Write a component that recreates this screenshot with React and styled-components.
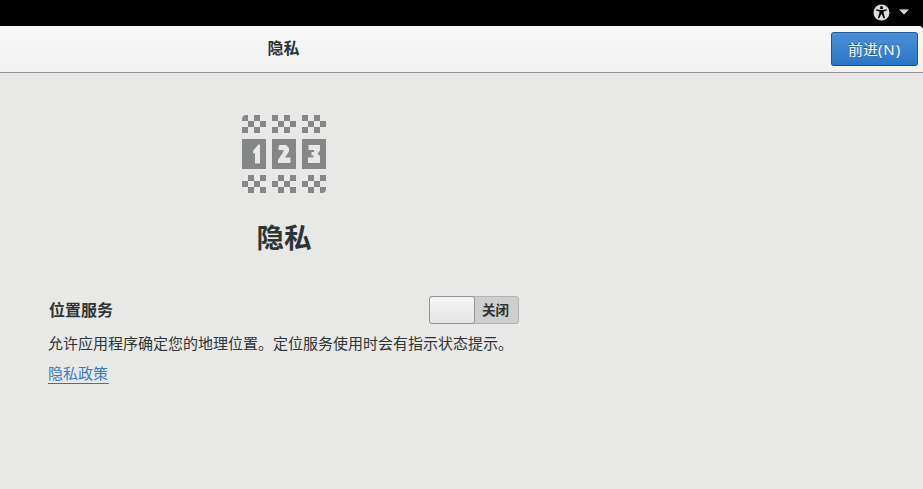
import React from "react";
import styled, { createGlobalStyle } from "styled-components";

const GlobalStyle = createGlobalStyle`
  * { box-sizing: border-box; }
  body {
    margin: 0;
    background: #000;
    color: #2e3436;
    font-family: "Noto Sans CJK SC", "Noto Sans", sans-serif;
    overflow: hidden;
  }
`;

const Screen = styled.div`
  display: flex;
  flex-direction: column;
  width: 923px;
  height: 489px;
`;

const TopBar = styled.div`
  display: flex;
  flex: none;
  align-items: center;
  justify-content: flex-end;
  gap: 8px;
  height: 26px;
  padding: 0 13px 2px 0;
  background: #000;
`;

const HeaderBar = styled.header`
  display: grid;
  flex: none;
  grid-template-columns: 567px 1fr;
  align-items: center;
  height: 47px;
  padding-right: 5px;
  background: linear-gradient(#f7f7f7, #f2f2f2);
  border-bottom: 1px solid #919191;
  border-top-right-radius: 4px;
`;

const HeaderTitle = styled.div`
  padding-bottom: 4px;
  font-size: 16px;
  font-weight: 700;
  line-height: 24px;
  text-align: center;
`;

const NextButton = styled.button`
  justify-self: end;
  width: 87px;
  height: 34px;
  padding: 0 0 1px;
  border: 1px solid #1c5187;
  border-color: #215b9c #1f5590 #184a80;
  border-radius: 3px;
  background: linear-gradient(#4a90d9, #2a76c6);
  color: #fff;
  font: 400 15px/29px "Noto Sans CJK SC", sans-serif;
  text-shadow: 0 -1px rgba(0, 0, 0, 0.35);
`;

const Latin = styled.span`
  font-family: "Noto Sans", sans-serif;
  letter-spacing: 0.9px;
`;

const Page = styled.main`
  flex: 1;
  padding: 42px 0 0 49px;
  background: #e8e8e7;
`;

const Column = styled.section`
  display: flex;
  flex-direction: column;
  width: 470px;
`;

const Hero = styled.div`
  display: flex;
  flex-direction: column;
  align-items: center;
`;

const HeroTitle = styled.h1`
  margin: 23px 0 0;
  font-size: 27.5px;
  font-weight: 700;
  line-height: 40px;
`;

const SettingRow = styled.div`
  display: flex;
  align-items: center;
  justify-content: space-between;
  height: 28px;
  margin-top: 40px;
`;

const SettingName = styled.h2`
  margin: 0;
  padding-bottom: 3px;
  font-size: 16px;
  font-weight: 700;
  line-height: 24px;
`;

const Switch = styled.div`
  display: flex;
  width: 90px;
  height: 28px;
  border: 1px solid #b3b3b2;
  border-radius: 3px;
  background: #cecece;
`;

const Knob = styled.div`
  width: 46px;
  height: 28px;
  margin: -1px 0 0 -1px;
  border: 1px solid #959595;
  border-radius: 3px;
  background: linear-gradient(#f6f6f6, #e4e4e4);
`;

const SwitchLabel = styled.span`
  flex: 1;
  padding-right: 2px;
  font-size: 13.5px;
  font-weight: 700;
  line-height: 24px;
  text-align: center;
`;

const Description = styled.p`
  margin: 8px 0 0 -1px;
  font-size: 15px;
  line-height: 22px;
  white-space: nowrap;
`;

const PolicyLink = styled.a`
  align-self: flex-start;
  height: 22px;
  margin: 8px 0 0 -1px;
  padding-right: 1px;
  border-bottom: 1px solid #2a76c6;
  color: #2f7dcd;
  font-size: 15px;
  line-height: 21px;
`;

function AccessibilityIcon() {
  return (
    <svg width="17" height="17" viewBox="0 0 17 17">
      <circle cx="8.5" cy="8.5" r="8" fill="#dcdcdc" />
      <circle cx="8.5" cy="3.7" r="1.6" fill="#000" />
      <path d="M3.3 5.3 7 6h3l3.7-.7.2 1.2-3.4 1 .3 2.2 1.3 4.4-1.3.5-2-4.4h-.6l-2 4.4-1.3-.5 1.3-4.4.3-2.2-3.4-1z" fill="#000" />
    </svg>
  );
}

function MenuArrow() {
  return (
    <svg width="12" height="6" viewBox="0 0 12 6">
      <path d="M1 .5h10l-5 5z" fill="#dcdcdc" />
    </svg>
  );
}

const TOP_CELLS = [[0, 0], [2, 0], [1, 1], [3, 1], [0, 2], [2, 2]];
const BOTTOM_CELLS = [[1, 0], [3, 0], [0, 1], [2, 1], [1, 2], [3, 2]];
const DIGITS = [
  "M16.500 5.500H18V24.500H13V14.500H11.200V11.500z",
  "M7.500 6H14l3 3v3.500L13 18.500H18.500V24H6v-3l5.500-8.500v-1.500H6.500V8z",
  "M6.500 6H18v5.500l-2.500 3 2.500 2.500V24H6V18.500h5.500v-2H9.500v-3.500h2.500v-2h-5.500z",
];

function Cell({ x, y, block, bottom }) {
  if (!bottom && block === 0 && x === 0 && y === 0) {
    return <path d="M0 6V4.500Q0 0 4.500 0H6V6z" />;
  }
  if (bottom && block === 2 && x === 3 && y === 2) {
    return <path d="M18 12h6v1.500Q24 18 19.500 18H18z" />;
  }
  return <rect x={x * 6} y={y * 6} width="6" height="6" />;
}

function PrivacyIcon() {
  return (
    <svg width="84" height="78" viewBox="0 0 84 78" fill="#858786">
      {DIGITS.map((digit, block) => (
        <g key={block} transform={`translate(${block * 30} 0)`}>
          {TOP_CELLS.map(([x, y]) => (
            <Cell key={`${x}${y}`} x={x} y={y} block={block} />
          ))}
          <g transform="translate(0 24)">
            <rect width="24" height="30" />
            <path d={digit} fill="#e8e8e7" />
          </g>
          <g transform="translate(0 60)">
            {BOTTOM_CELLS.map(([x, y]) => (
              <Cell key={`${x}${y}`} x={x} y={y} block={block} bottom />
            ))}
          </g>
        </g>
      ))}
    </svg>
  );
}

export default function App() {
  return (
    <>
      <GlobalStyle />
      <Screen>
        <TopBar>
          <AccessibilityIcon />
          <MenuArrow />
        </TopBar>
        <HeaderBar>
          <HeaderTitle>隐私</HeaderTitle>
          <NextButton>前进<Latin>(N)</Latin></NextButton>
        </HeaderBar>
        <Page>
          <Column>
            <Hero>
              <PrivacyIcon />
              <HeroTitle>隐私</HeroTitle>
            </Hero>
            <SettingRow>
              <SettingName>位置服务</SettingName>
              <Switch>
                <Knob />
                <SwitchLabel>关闭</SwitchLabel>
              </Switch>
            </SettingRow>
            <Description>允许应用程序确定您的地理位置。定位服务使用时会有指示状态提示。</Description>
            <PolicyLink>隐私政策</PolicyLink>
          </Column>
        </Page>
      </Screen>
    </>
  );
}
